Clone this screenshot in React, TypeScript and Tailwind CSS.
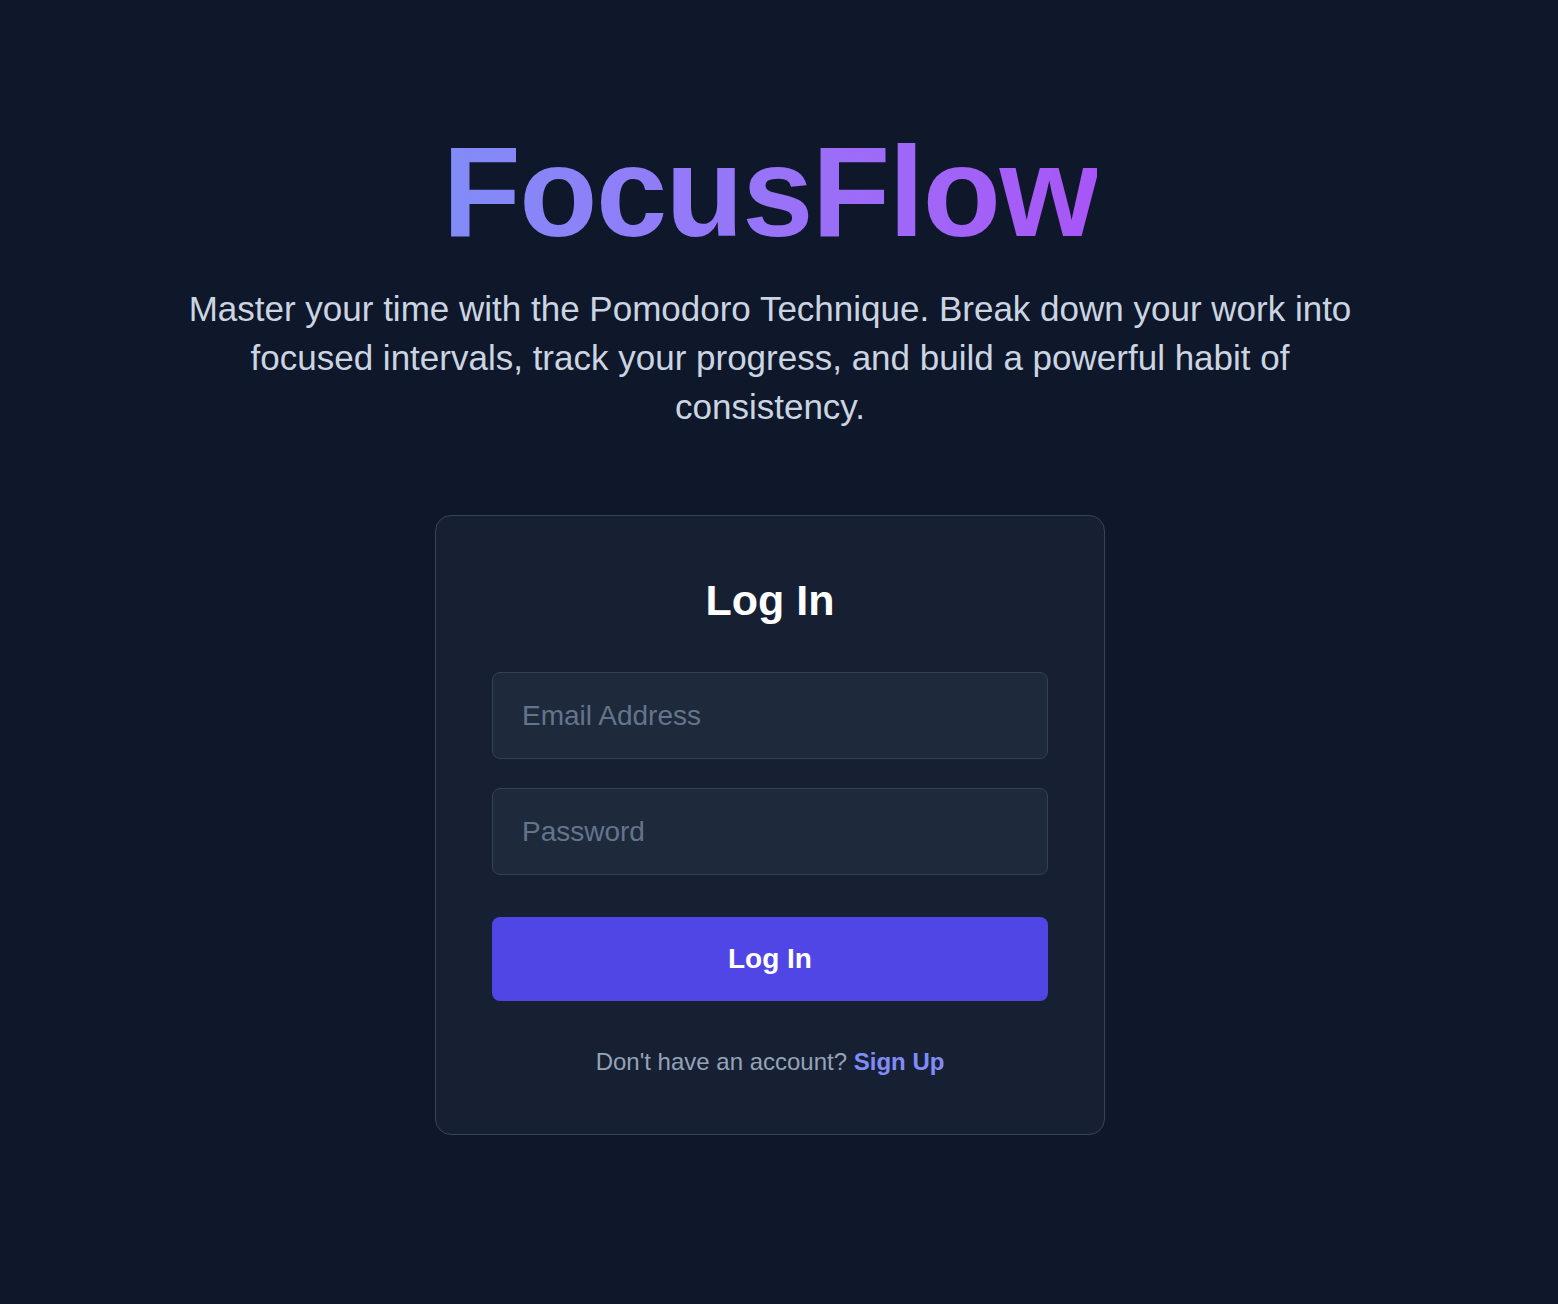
import React from 'react';

const App: React.FC = () => {
    return (
        <div className="min-h-screen w-full bg-[#0f172a] font-['Liberation_Sans',Arial,sans-serif]">
            <div className="flex flex-col items-center pt-[128px] pb-16 pr-[18px]">
                <h1 className="inline-block bg-gradient-to-r from-[#818cf8] to-[#a855f7] bg-clip-text text-[128px] font-bold leading-none tracking-[-1.5px] text-transparent">
                    FocusFlow
                </h1>
                <p className="mt-7 max-w-[1200px] text-center text-[35px] leading-[49px] text-[#cbd5e1]">
                    Master your time with the Pomodoro Technique. Break down your work into focused intervals, track your progress, and build a powerful habit of consistency.
                </p>

                <div className="mt-[84px] w-[670px] rounded-2xl border border-[#36445a] bg-[#172033] p-14">
                    <h2 className="mb-[44px] text-center text-[43px] font-bold leading-[56px] text-white">Log In</h2>
                    <form className="flex flex-col" onSubmit={(e) => e.preventDefault()}>
                        <input
                            type="email"
                            placeholder="Email Address"
                            className="h-[87px] w-full rounded-lg border border-[#334155] bg-[#1e293b] px-[29px] text-[28px] text-white outline-none placeholder:text-[#64748b]"
                        />
                        <input
                            type="password"
                            placeholder="Password"
                            className="mt-[29px] h-[87px] w-full rounded-lg border border-[#334155] bg-[#1e293b] px-[29px] text-[28px] text-white outline-none placeholder:text-[#64748b]"
                        />
                        <button
                            type="submit"
                            className="mt-[42px] h-[84px] w-full rounded-lg bg-[#4f46e5] text-[28px] font-bold text-white"
                        >
                            Log In
                        </button>
                    </form>
                    <p className="mt-[45px] text-center text-[24px] leading-8 text-[#94a3b8]">
                        Don't have an account? <a href="#" className="font-bold text-[#818cf8]">Sign Up</a>
                    </p>
                </div>
            </div>
        </div>
    );
};

export default App;
